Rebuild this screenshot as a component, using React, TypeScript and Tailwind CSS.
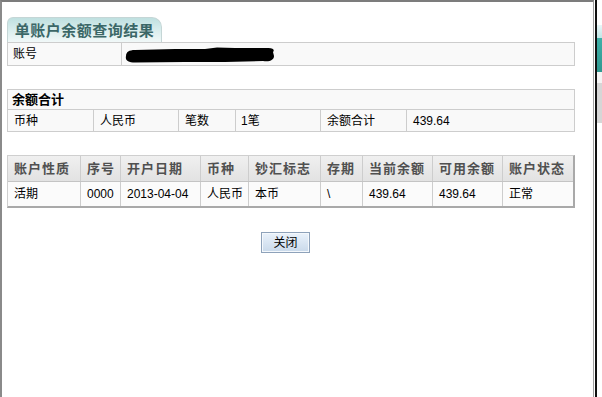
import React from "react";

const font = "font-['Liberation_Sans','Noto_Sans_CJK_SC',sans-serif]";

export default function App() {
  const headers = [
    { t: "账户性质", w: "w-[73px]" },
    { t: "序号", w: "w-[40px]" },
    { t: "开户日期", w: "w-[80px]" },
    { t: "币种", w: "w-[48px]" },
    { t: "钞汇标志", w: "w-[72px]" },
    { t: "存期", w: "w-[42px]" },
    { t: "当前余额", w: "w-[70px]" },
    { t: "可用余额", w: "w-[70px]" },
    { t: "账户状态", w: "flex-1" },
  ];
  const row = ["活期", "0000", "2013-04-04", "人民币", "本币", "\\", "439.64", "439.64", "正常"];

  return (
    <div className={`w-[602px] h-[397px] flex bg-white text-black ${font}`}>
      <div className="w-[594px] h-full border-t-2 border-l-2 border-r border-t-[#7c7c7c] border-l-[#8a8a8a] border-r-[#a0a0a0] pl-[5px] pt-[15px] flex flex-col">
        {/* Tab */}
        <div className="w-[155px] h-[25px] rounded-tl-[6px] rounded-tr-[10px] border border-b-0 border-[#c5d6d6] bg-gradient-to-b from-[#bfe0e0] via-[#d9eded] to-[#f1f8f8] flex items-center justify-center">
          <span className="text-[15px] font-bold tracking-[0.5px] text-[#3b6767] leading-none">单账户余额查询结果</span>
        </div>
        {/* Account row */}
        <div className="w-[568px] h-[24px] flex border border-[#cdcdcd] bg-[#f9f9f9] text-[12px]">
          <div className="w-[114px] border-r border-[#cdcdcd] pl-[5px] flex items-center">账号</div>
          <div className="flex-1 flex items-center pl-[3px] pt-[1px]">
            <svg width="150" height="16" viewBox="0 0 150 16">
              <path
                d="M1,9 C1,5 4,3 10,3 L50,2 L80,2 L92,0.5 L110,1 L142,1 C148,0.5 150,3 148,5 L149,9 C149,13 145,15 138,14 L100,15 L60,15 L10,15.5 C3,15.5 0,13 1,9 Z"
                fill="#000"
              />
            </svg>
          </div>
        </div>
        {/* Summary */}
        <div className="w-[568px] mt-[23px] border border-[#cdcdcd] bg-[#f9f9f9] text-[12px]">
          <div className="h-[20px] border-b border-[#cdcdcd] pl-[4px] flex items-center font-bold text-[13px]">余额合计</div>
          <div className="h-[21px] flex">
            <div className="w-[86px] border-r border-[#cdcdcd] pl-[6px] flex items-center">币种</div>
            <div className="w-[85px] border-r border-[#cdcdcd] pl-[6px] flex items-center">人民币</div>
            <div className="w-[57px] border-r border-[#cdcdcd] pl-[6px] flex items-center">笔数</div>
            <div className="w-[85px] border-r border-[#cdcdcd] pl-[5px] flex items-center">1笔</div>
            <div className="w-[86px] border-r border-[#cdcdcd] pl-[6px] flex items-center">余额合计</div>
            <div className="flex-1 pl-[6px] flex items-center">439.64</div>
          </div>
        </div>
        {/* Main table */}
        <div className="w-[568px] mt-[23px] border-t border-l border-r-2 border-b-2 border-t-[#cfcfcf] border-l-[#cfcfcf] border-r-[#a9a9a9] border-b-[#a9a9a9]">
          <div className="h-[26px] flex bg-gradient-to-b from-[#f0f0f0] to-[#e2e2e2] border-b border-[#c4c4c4]">
            {headers.map((h, i) => (
              <div
                key={i}
                className={`${h.w} ${i < headers.length - 1 ? "border-r border-[#cdcdcd]" : ""} pl-[6px] flex items-center text-[13px] font-bold tracking-[1px] text-[#505050]`}
              >
                {h.t}
              </div>
            ))}
          </div>
          <div className="h-[24px] flex bg-[#fbfbfb] text-[12px]">
            {row.map((c, i) => (
              <div
                key={i}
                className={`${headers[i].w} ${i < row.length - 1 ? "border-r border-[#cdcdcd]" : ""} pl-[6px] flex items-center`}
              >
                {c}
              </div>
            ))}
          </div>
        </div>
        {/* Button */}
        <div className="w-[568px] mt-[24px] flex justify-center pr-[11px]">
          <button className="w-[49px] h-[21px] border border-[#8ea2ba] bg-gradient-to-b from-[#eaf2fb] to-[#c9d9ea] text-[12px] text-black flex items-center justify-center shadow-[inset_0_0_0_1px_#f4f8fc]">
            关闭
          </button>
        </div>
      </div>
      <div className="w-[1px] h-full bg-white" />
      <div className="w-[2px] h-full bg-[#111]" />
      <div className="w-[5px] h-full flex flex-col bg-white">
        <div className="h-[25px]" />
        <div className="h-[13px] bg-gradient-to-b from-[#e8f6f8] to-[#bfe6e6]" />
        <div className="h-[34px] bg-gradient-to-b from-[#3fb0a8] to-[#2f9890]" />
        <div className="h-[11px] bg-[#f4f4f4]" />
        <div className="h-[40px] bg-[#d6d6d6]" />
      </div>
    </div>
  );
}
